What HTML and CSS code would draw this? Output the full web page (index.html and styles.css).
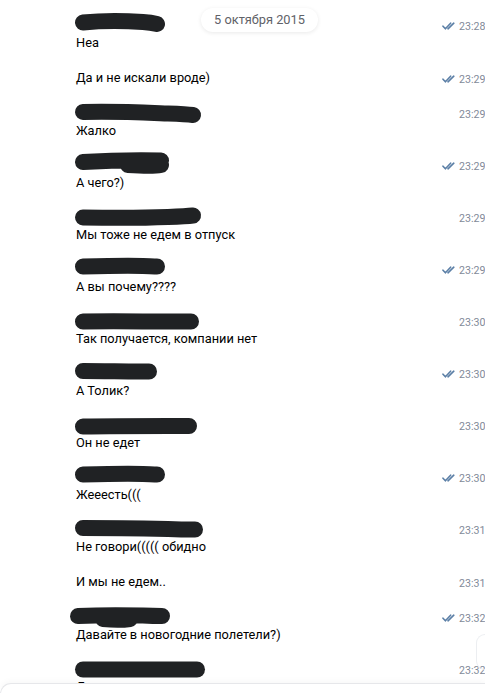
FILE: index.html
```html
<!DOCTYPE html>
<html lang="ru">
<head>
<meta charset="utf-8">
<title>Чат</title>
<link rel="stylesheet" href="styles.css">
</head>
<body>
<div class="chat">

  <div class="msg">
    <div class="body">
      <div class="line name"><svg class="scr" width="96" height="26" viewBox="0 0 96 26"><path d="M10 10.5 C30 8.5 55 9 70 10 C78 10.5 82 11.5 84 12" /></svg></div>
      <div class="line text">Неа</div>
    </div>
    <div class="meta"><svg class="chk" width="14" height="8" viewBox="0 0 14 8"><path d="M1 4.2 L3.4 6.8 L8.6 1.2 M6 6.8 L11.8 1.2"/></svg><span>23:28</span></div>
  </div>

  <div class="msg cont">
    <div class="body"><div class="line text">Да и не искали вроде)</div></div>
    <div class="meta"><svg class="chk" width="14" height="8" viewBox="0 0 14 8"><path d="M1 4.2 L3.4 6.8 L8.6 1.2 M6 6.8 L11.8 1.2"/></svg><span>23:29</span></div>
  </div>

  <div class="msg">
    <div class="body">
      <div class="line name"><svg class="scr" width="132" height="26" viewBox="0 0 132 26"><path d="M10 12 C40 11 70 12.5 95 13.5 C108 14 116 14.5 120 15" /></svg></div>
      <div class="line text">Жалко</div>
    </div>
    <div class="meta"><svg class="chk off" width="14" height="8" viewBox="0 0 14 8"><path d="M1 4.2 L3.4 6.8 L8.6 1.2 M6 6.8 L11.8 1.2"/></svg><span>23:29</span></div>
  </div>

  <div class="msg">
    <div class="body">
      <div class="line name"><svg class="scr" width="100" height="26" viewBox="0 0 100 26"><path d="M10 10 C35 8.5 60 8 88 8.5 M55 13 C70 14 80 14.5 88 13" /></svg></div>
      <div class="line text">А чего?)</div>
    </div>
    <div class="meta"><svg class="chk" width="14" height="8" viewBox="0 0 14 8"><path d="M1 4.2 L3.4 6.8 L8.6 1.2 M6 6.8 L11.8 1.2"/></svg><span>23:29</span></div>
  </div>

  <div class="msg">
    <div class="body">
      <div class="line name"><svg class="scr" width="132" height="26" viewBox="0 0 132 26"><path d="M10 13.5 C40 14 70 14 95 13 C108 12.5 116 12 120 11.5" /></svg></div>
      <div class="line text">Мы тоже не едем в отпуск</div>
    </div>
    <div class="meta"><svg class="chk off" width="14" height="8" viewBox="0 0 14 8"><path d="M1 4.2 L3.4 6.8 L8.6 1.2 M6 6.8 L11.8 1.2"/></svg><span>23:29</span></div>
  </div>

  <div class="msg">
    <div class="body">
      <div class="line name"><svg class="scr" width="96" height="26" viewBox="0 0 96 26"><path d="M10 10.5 C30 10 55 9.5 70 10 C78 10.3 82 10.5 84 10.5" /></svg></div>
      <div class="line text">А вы почему????</div>
    </div>
    <div class="meta"><svg class="chk" width="14" height="8" viewBox="0 0 14 8"><path d="M1 4.2 L3.4 6.8 L8.6 1.2 M6 6.8 L11.8 1.2"/></svg><span>23:29</span></div>
  </div>

  <div class="msg">
    <div class="body">
      <div class="line name"><svg class="scr" width="130" height="26" viewBox="0 0 130 26"><path d="M10 13.5 C40 13 70 13.5 95 13.5 C108 13.5 114 13.5 118 13.5" /></svg></div>
      <div class="line text">Так получается, компании нет</div>
    </div>
    <div class="meta"><svg class="chk off" width="14" height="8" viewBox="0 0 14 8"><path d="M1 4.2 L3.4 6.8 L8.6 1.2 M6 6.8 L11.8 1.2"/></svg><span>23:30</span></div>
  </div>

  <div class="msg">
    <div class="body">
      <div class="line name"><svg class="scr" width="88" height="26" viewBox="0 0 88 26"><path d="M10 11 C30 11 50 11.5 65 11.5 C70 11.5 74 11.5 76 11.5" /></svg></div>
      <div class="line text">А Толик?</div>
    </div>
    <div class="meta"><svg class="chk" width="14" height="8" viewBox="0 0 14 8"><path d="M1 4.2 L3.4 6.8 L8.6 1.2 M6 6.8 L11.8 1.2"/></svg><span>23:30</span></div>
  </div>

  <div class="msg">
    <div class="body">
      <div class="line name"><svg class="scr" width="128" height="26" viewBox="0 0 128 26"><path d="M10 14.5 C40 14 70 14 95 14 C106 14 112 14 116 14" /></svg></div>
      <div class="line text">Он не едет</div>
    </div>
    <div class="meta"><svg class="chk off" width="14" height="8" viewBox="0 0 14 8"><path d="M1 4.2 L3.4 6.8 L8.6 1.2 M6 6.8 L11.8 1.2"/></svg><span>23:30</span></div>
  </div>

  <div class="msg">
    <div class="body">
      <div class="line name"><svg class="scr" width="96" height="26" viewBox="0 0 96 26"><path d="M10 10.5 C30 10 55 9.5 70 10 C78 10.3 82 10.5 84 10.5" /></svg></div>
      <div class="line text">Жееесть(((</div>
    </div>
    <div class="meta"><svg class="chk" width="14" height="8" viewBox="0 0 14 8"><path d="M1 4.2 L3.4 6.8 L8.6 1.2 M6 6.8 L11.8 1.2"/></svg><span>23:30</span></div>
  </div>

  <div class="msg">
    <div class="body">
      <div class="line name"><svg class="scr" width="134" height="26" viewBox="0 0 134 26"><path d="M10 12 C40 12 70 12.5 95 13 C108 13.5 116 13.5 122 13.5" /></svg></div>
      <div class="line text">Не говори((((( обидно</div>
    </div>
    <div class="meta"><svg class="chk off" width="14" height="8" viewBox="0 0 14 8"><path d="M1 4.2 L3.4 6.8 L8.6 1.2 M6 6.8 L11.8 1.2"/></svg><span>23:31</span></div>
  </div>

  <div class="msg cont">
    <div class="body"><div class="line text">И мы не едем..</div></div>
    <div class="meta"><svg class="chk off" width="14" height="8" viewBox="0 0 14 8"><path d="M1 4.2 L3.4 6.8 L8.6 1.2 M6 6.8 L11.8 1.2"/></svg><span>23:31</span></div>
  </div>

  <div class="msg">
    <div class="body">
      <div class="line name shift"><svg class="scr" width="106" height="26" viewBox="0 0 106 26"><path d="M10 12 C30 11 55 11 75 11.5 C85 12 90 12 94 12 M35 15 C45 16 55 16 62 15" /></svg></div>
      <div class="line text">Давайте в новогодние полетели?)</div>
    </div>
    <div class="meta"><svg class="chk" width="14" height="8" viewBox="0 0 14 8"><path d="M1 4.2 L3.4 6.8 L8.6 1.2 M6 6.8 L11.8 1.2"/></svg><span>23:32</span></div>
  </div>

  <div class="msg">
    <div class="body">
      <div class="line name"><svg class="scr" width="136" height="26" viewBox="0 0 136 26"><path d="M10 13.5 C40 13.5 70 13.5 95 13.5 C108 13.5 116 13.5 124 13.5" /></svg></div>
      <div class="line text">Да</div>
    </div>
    <div class="meta"><svg class="chk off" width="14" height="8" viewBox="0 0 14 8"><path d="M1 4.2 L3.4 6.8 L8.6 1.2 M6 6.8 L11.8 1.2"/></svg><span>23:32</span></div>
  </div>

</div>

<div class="date">5 октября 2015</div>
<div class="scroll-btn"></div>
<div class="composer"></div>
</body>
</html>
```

FILE: styles.css
```css
html, body {
  margin: 0;
  padding: 0;
  overflow: hidden;
  background: #fff;
}
body {
  position: relative;
  width: 485px;
  height: 693px;
  font-family: Roboto, "Liberation Sans", Arial, sans-serif;
  font-size: 12.8px;
  color: #000;
}
.chat {
  padding-top: 8px;
}
.msg {
  display: flex;
  padding: 8px 0;
}
.msg.cont {
  padding: 9px 0 8px;
}
.body {
  flex: 1;
  min-width: 0;
  padding-left: 76px;
}
.line {
  height: 18px;
  line-height: 18px;
  white-space: nowrap;
}
.name {
  position: relative;
}
.scr {
  display: block;
  position: relative;
  top: -4px;
  left: -3px;
}
.name.shift .scr {
  left: -8px;
}
.scr path {
  fill: none;
  stroke: #202224;
  stroke-width: 16;
  stroke-linecap: round;
  stroke-linejoin: round;
}
.meta {
  flex: none;
  width: 43px;
  height: 18px;
  display: flex;
  align-items: center;
  gap: 3px;
  color: #828a99;
  font-size: 10.6px;
  white-space: nowrap;
  padding-top: 1px;
}
.chk {
  flex: none;
}
.chk path {
  fill: none;
  stroke: #5b7fa6;
  stroke-width: 1.6;
  stroke-linecap: round;
  stroke-linejoin: round;
}
.chk.off {
  visibility: hidden;
}
.date {
  position: absolute;
  top: 8px;
  left: 201px;
  width: 117px;
  height: 24px;
  line-height: 24px;
  text-align: center;
  font-size: 12.8px;
  color: #5f6268;
  background: #fff;
  border-radius: 12px;
  box-shadow: 0 1px 4px rgba(0, 0, 0, 0.09);
}
.scroll-btn {
  position: absolute;
  right: 0;
  top: 634px;
  width: 8px;
  height: 34px;
  border: 1px solid #eceef1;
  border-right: none;
  border-radius: 17px 0 0 17px / 17px 0 0 17px;
  background: transparent;
}
.composer {
  position: absolute;
  left: 0;
  right: 0;
  top: 683px;
  height: 10px;
  background: #fff;
  border-top: 1px solid #e6e7ea;
  border-left: 1px solid #e6e7ea;
  border-radius: 20px 0 0 0;
  box-shadow: 0 -2px 6px rgba(0, 0, 0, 0.03);
}
```
